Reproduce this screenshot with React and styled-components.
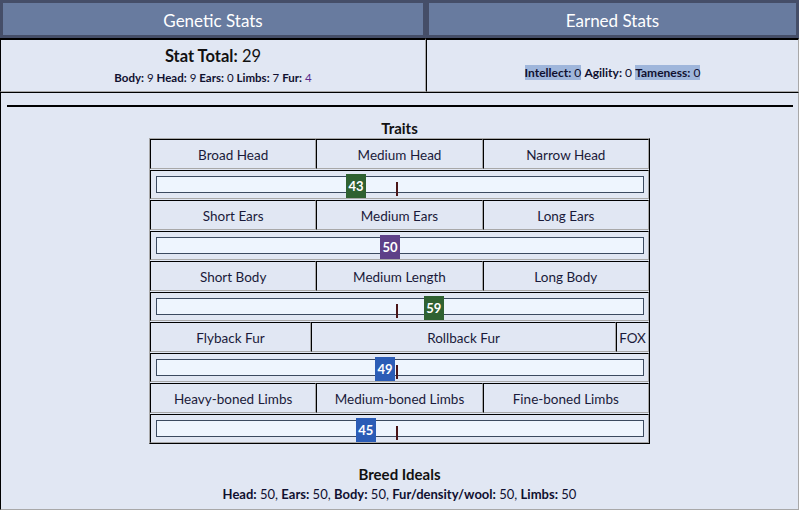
import styled, { createGlobalStyle } from 'styled-components';

const traits = [
  { cells: ['Broad Head', 'Medium Head', 'Narrow Head'], value: 43, color: '#2f6131' },
  { cells: ['Short Ears', 'Medium Ears', 'Long Ears'], value: 50, color: '#5e4088' },
  { cells: ['Short Body', 'Medium Length', 'Long Body'], value: 59, color: '#2f6131' },
  { cells: ['Flyback Fur', 'Rollback Fur', 'FOX'], value: 49, color: '#2b5cb6', cols: '161px 1fr 33px' },
  { cells: ['Heavy-boned Limbs', 'Medium-boned Limbs', 'Fine-boned Limbs'], value: 45, color: '#2b5cb6' },
];

const App = () => {
  return (
    <>
      <GlobalStyle />
      <Page>
        <TabBar>
          <TabSlot><Tab>Genetic Stats</Tab></TabSlot>
          <TabSlot><Tab>Earned Stats</Tab></TabSlot>
        </TabBar>
        <StatsRow>
          <Panel>
            <Total><b>Stat Total:</b> 29</Total>
            <SubStats>
              <b>Body:</b> 9 <b>Head:</b> 9 <b>Ears:</b> 0 <b>Limbs:</b> 7 <b>Fur:</b> <Accent>4</Accent>
            </SubStats>
          </Panel>
          <Panel $bottom>
            <SubStats $size="12px">
              <Mark><b>Intellect:</b> 0</Mark> <b>Agility:</b> 0 <Mark><b>Tameness:</b> 0</Mark>
            </SubStats>
          </Panel>
        </StatsRow>
        <Main>
          <Rule />
          <Heading>Traits</Heading>
          <Table>
            {traits.map((t) => (
              <TraitGroup key={t.cells[0]}>
                <HeaderRow $cols={t.cols}>
                  {t.cells.map((c) => (
                    <Cell key={c}>{c}</Cell>
                  ))}
                </HeaderRow>
                <SliderCell>
                  <Track>
                    <Ideal />
                    <Badge $color={t.color} style={{ left: `calc(${t.value}% - 20px)` }}>
                      {t.value}
                    </Badge>
                  </Track>
                </SliderCell>
              </TraitGroup>
            ))}
          </Table>
          <Ideals>
            <Heading>Breed Ideals</Heading>
            <IdealsLine>
              <b>Head:</b> 50, <b>Ears:</b> 50, <b>Body:</b> 50, <b>Fur/density/wool:</b> 50, <b>Limbs:</b> 50
            </IdealsLine>
          </Ideals>
        </Main>
      </Page>
    </>
  );
};

const GlobalStyle = createGlobalStyle`
  body {
    margin: 0;
    background: #e1e7f3;
    font-family: Lato, 'Open Sans', sans-serif;
    color: #14142a;
  }
  b {
    font-weight: 700;
  }
`;

const Page = styled.div`
  width: 799px;
  height: 510px;
  display: flex;
  flex-direction: column;
  background: #e1e7f3;
  overflow: hidden;
`;

const TabBar = styled.div`
  display: grid;
  grid-template-columns: 426px 1fr;
  background: #454e68;
`;

const TabSlot = styled.div`
  padding: 3px;
`;

const Tab = styled.div`
  height: 32px;
  padding-top: 2px;
  box-sizing: border-box;
  display: flex;
  align-items: center;
  justify-content: center;
  background: #687b9f;
  color: #fff;
  font-size: 17px;
`;

const StatsRow = styled.div`
  display: grid;
  grid-template-columns: 426px 1fr;
  height: 54px;
`;

const Panel = styled.div`
  display: flex;
  flex-direction: column;
  align-items: center;
  justify-content: ${({ $bottom }) => ($bottom ? 'flex-end' : 'center')};
  padding-bottom: ${({ $bottom }) => ($bottom ? '11px' : '0')};
  border-style: solid;
  border-width: 2px 1px 1px 1px;
  border-color: #000 #a8a8a8 #a8a8a8 #000;
`;

const Total = styled.div`
  font-size: 16.5px;
  line-height: 20px;
  color: #111;
`;

const SubStats = styled.div`
  font-size: ${({ $size }) => $size || '11.5px'};
  line-height: 15px;
  margin-top: 4px;
  color: #101030;
`;

const Accent = styled.span`
  color: #5a2a8c;
`;

const Mark = styled.span`
  background: #9fb6db;
`;

const Main = styled.div`
  flex: 1;
  display: flex;
  flex-direction: column;
  align-items: center;
  padding: 12px 5px 0;
  border-style: solid;
  border-width: 1px;
  border-color: #000 #a8a8a8 #a8a8a8 #000;
`;

const Rule = styled.div`
  align-self: stretch;
  margin: 0 0 0 1px;
  height: 2px;
  background: #000;
`;

const Heading = styled.div`
  font-size: 15px;
  font-weight: 700;
  line-height: 19px;
  margin-top: 12px;
  color: #111;
`;

const Table = styled.div`
  width: 499px;
  display: flex;
  flex-direction: column;
  gap: 1px;
  border-style: solid;
  border-width: 1px;
  border-color: #a8a8a8 #000 #000 #a8a8a8;
`;

const TraitGroup = styled.div`
  display: flex;
  flex-direction: column;
  gap: 1px;
`;

const HeaderRow = styled.div`
  display: grid;
  grid-template-columns: ${({ $cols }) => $cols || '1fr 1fr 1fr'};
  height: 30px;
`;

const Cell = styled.div`
  display: flex;
  align-items: center;
  justify-content: center;
  padding-top: 2px;
  font-size: 13.5px;
  color: #1a1a3a;
  border-style: solid;
  border-width: 1px;
  border-color: #000 #a8a8a8 #a8a8a8 #000;
`;

const SliderCell = styled.div`
  height: 29px;
  padding: 5px 4px 0 5px;
  box-sizing: border-box;
  border-style: solid;
  border-width: 1px;
  border-color: #000 #a8a8a8 #a8a8a8 #000;
`;

const Track = styled.div`
  position: relative;
  height: 17px;
  box-sizing: border-box;
  background: #eef5fe;
  border: 1px solid #3b4a60;
`;

const Ideal = styled.div`
  position: absolute;
  left: calc(50% - 4px);
  top: 5px;
  width: 2px;
  height: 14px;
  background: #4a1518;
`;

const Badge = styled.div`
  position: absolute;
  top: -3px;
  width: 20px;
  height: 24px;
  display: flex;
  align-items: center;
  justify-content: center;
  background: ${({ $color }) => $color};
  color: #fff;
  font-size: 13px;
  font-weight: 700;
`;

const Ideals = styled.div`
  display: flex;
  flex-direction: column;
  align-items: center;
  margin-top: 9px;
`;

const IdealsLine = styled.div`
  font-size: 13px;
  line-height: 17px;
  margin-top: 2px;
  color: #101030;
`;

export default App;
